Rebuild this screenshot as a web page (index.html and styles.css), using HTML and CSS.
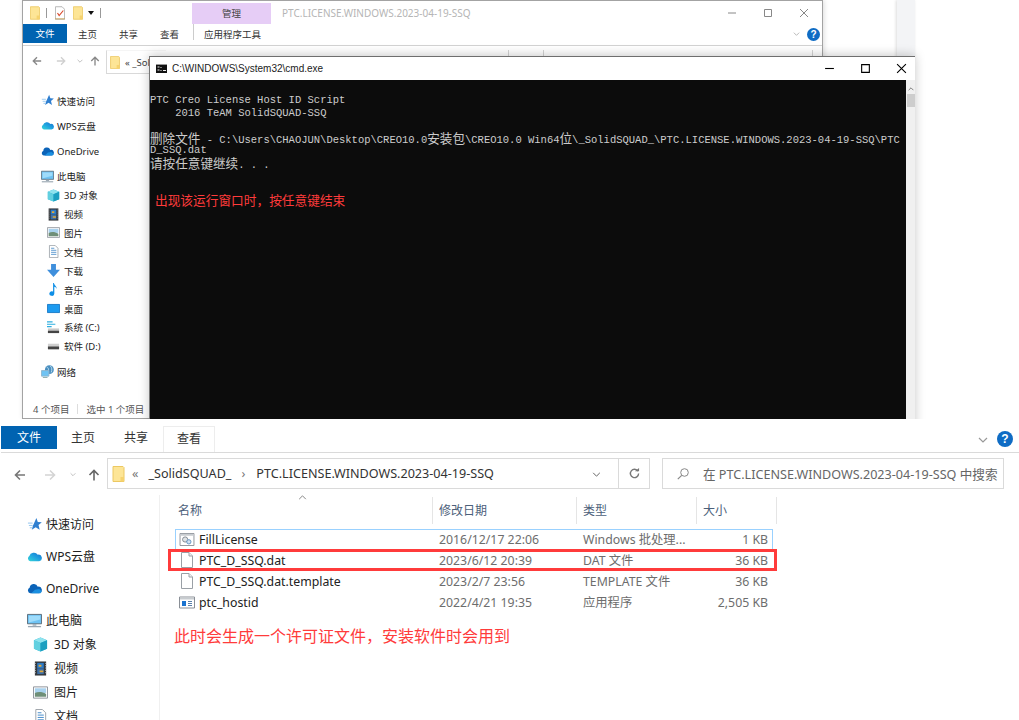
FILE: index.html
```html
<!DOCTYPE html>
<html lang="zh-CN">
<head>
<meta charset="utf-8">
<title>PTC.LICENSE.WINDOWS.2023-04-19-SSQ</title>
<link rel="stylesheet" href="styles.css">
</head>
<body>
<svg class="defs" width="0" height="0" aria-hidden="true">
  <defs>
    <linearGradient id="g-wps" x1="0" y1="1" x2="1" y2="0"><stop offset="0" stop-color="#35d6d8"/><stop offset=".55" stop-color="#1f9ee0"/><stop offset="1" stop-color="#1470cc"/></linearGradient>
    <symbol id="i-folder" viewBox="0 0 12 16"><path d="M.5.5h10l1 1v14H.5z" fill="#fde596" stroke="#ecc862"/><path d="M8 11h3.500v4.500H8z" fill="#f6d36f"/></symbol>
    <symbol id="i-check" viewBox="0 0 12 16"><path d="M.5.5h8l3 3v12H.5z" fill="#fff" stroke="#a8a8a8"/><path d="M3 8l2 3 5-6" fill="none" stroke="#d9482b" stroke-width="1.400"/><path d="M0 15h12" stroke="#c8a050"/></symbol>
    <symbol id="i-star" viewBox="0 0 16 16"><path d="M10 1l1.500 4.300L15.800 5.500 12.300 8.500l1.200 5-4.200-2.700-4.200 2.700 1.200-4.200z" fill="#2f7fd0"/><path d="M1 6.500h5M2 9h4M3 11.500h3" stroke="#8cc2ee" stroke-width="1"/></symbol>
    <symbol id="i-wps" viewBox="0 0 16 11"><path d="M3.500 10.500A3 3 0 0 1 2.500 5 5 4.500 0 0 1 11.500 3.500a3.500 3.500 0 0 1 1.500 7z" fill="url(#g-wps)"/></symbol>
    <symbol id="i-cloud" viewBox="0 0 16 11"><path d="M3.500 10.500A3 3 0 0 1 2.800 4.800 4.500 4.500 0 0 1 11.500 3.500a3.500 3.500 0 0 1 1.500 7z" fill="#0b63b8"/><path d="M4.500 10.500l4-3.800 4.500-.7 2.800 2.500-1.500 2z" fill="#1a8fe0"/></symbol>
    <symbol id="i-pc" viewBox="0 0 16 16"><path d="M.5 1.500h15v10H.5z" fill="#6ec3f4" stroke="#5a6a78"/><path d="M2 3h12v4L2 10z" fill="#9fdcfb"/><path d="M6 12h4v1.500H6z" fill="#9aa7b2"/><path d="M1 14.500h14" stroke="#9aa7b2" stroke-width="1.400"/></symbol>
    <symbol id="i-cube" viewBox="0 0 16 16"><path d="M8 .5l7 3v9l-7 3-7-3v-9z" fill="#2ab5d4"/><path d="M8 .5l7 3L8 6.500 1 3.500z" fill="#8fe3ee"/><path d="M1 3.500l7 3v9l-7-3z" fill="#62d0e0"/><path d="M8 6.500l7-3v9l-7 3z" fill="#1c9fc0"/></symbol>
    <symbol id="i-film" viewBox="0 0 16 16"><path d="M2 .5h12v15H2z" fill="#33373b"/><path d="M4.500 2h7v6h-7z" fill="#2a7ac8"/><path d="M4.500 8h7v6h-7z" fill="#3d70a8"/><path d="M6 4h3v2H6zM7 10h4v2H7z" fill="#e0a83a"/><path d="M2.500 2v12M13.500 2v12" stroke="#c8c8c8" stroke-dasharray="1 1.500"/></symbol>
    <symbol id="i-pic" viewBox="0 0 16 13"><path d="M.5.5h15v12H.5z" fill="#fff" stroke="#8a8f96"/><path d="M2 2h12v5H2z" fill="#a9d2ee"/><path d="M2 7c3-1.500 8-1.500 12 1v3H2z" fill="#6f8f78"/></symbol>
    <symbol id="i-doc" viewBox="0 0 12 16"><path d="M1 .5h7l3.500 3.500v11.500H1z" fill="#fff" stroke="#9aa0a6"/><path d="M3 4h4M3 6.500h6.500M3 9h6.500M3 11.500h6.500" stroke="#3f86c6"/></symbol>
    <symbol id="i-down" viewBox="0 0 16 16"><path d="M5 0h6v7h5l-8 9-8-9h5z" fill="#3f8fdc"/></symbol>
    <symbol id="i-note" viewBox="0 0 10 16"><path d="M4.500 0h1c.500 3 3.500 3.500 3.500 7.500-.800-2-2-2.500-3-2.800V13a3 2.800 0 1 1-1.500-2.400z" fill="#0f8fe6"/></symbol>
    <symbol id="i-desk" viewBox="0 0 16 11"><path d="M.5.500h15v10H.5z" fill="#1d9bf0" stroke="#0a6fc0"/></symbol>
    <symbol id="i-sys" viewBox="0 0 14 14"><path d="M0 1h6M0 3.500h9M0 6h5" stroke="#2eaee0" stroke-width="1.200"/><path d="M1 8h12v5H1z" fill="#c8c8c8"/><path d="M1 10.500h12V13H1z" fill="#444"/></symbol>
    <symbol id="i-drv" viewBox="0 0 14 8"><path d="M1 1h12v6H1z" fill="#cfcfcf"/><path d="M1 4h12v3H1z" fill="#444"/></symbol>
    <symbol id="i-net" viewBox="0 0 14 14"><circle cx="9" cy="5" r="4.800" fill="#4a8fc0"/><path d="M6 2c2 1 3 3 1 6M10 1c2 2 2 4 1 7" stroke="#bfe0f0" fill="none"/><path d="M.5 6h8v6H.5z" fill="#6ec3f4" stroke="#8fb4cc"/><path d="M2 13.500h5" stroke="#8aa"/></symbol>
    <symbol id="i-gear" viewBox="0 0 16 14"><path d="M.5.500h15v13H.5z" fill="#fff" stroke="#8a8f96"/><path d="M1 1h14v2H1z" fill="#c8ccd0"/><circle cx="6" cy="7" r="2.800" fill="#dfe3e6" stroke="#7d858c"/><circle cx="10" cy="9.500" r="2.300" fill="#cfe0f0" stroke="#5f90c0"/></symbol>
    <symbol id="i-page" viewBox="0 0 12 16"><path d="M.5.500h7.500l3.500 3.500v11.500H.5z" fill="#fff" stroke="#9aa0a6"/><path d="M8 .500V4h3.500" fill="#eef0f2" stroke="#9aa0a6"/></symbol>
    <symbol id="i-exe" viewBox="0 0 16 12"><path d="M.5.500h15v11H.5z" fill="#fff" stroke="#8a8f96"/><path d="M1 1h14v2H1z" fill="#c8ccd0"/><path d="M3 4.500h4v5H3z" fill="#1a73d0"/><path d="M9 5h4M9 7h4M9 9h4" stroke="#5a7fa8"/></symbol>
    <symbol id="i-console" viewBox="0 0 11 9"><path d="M0 0h11v9H0z" fill="#111"/><path d="M0 .5h11" stroke="#999"/><path d="M1.500 3h2M1.500 6h2M5 3v1M5 6v1M7 6.500h3" stroke="#eee"/></symbol>
    <symbol id="i-back" viewBox="0 0 12 12"><path d="M11 6H1.500M6 1.500L1.500 6 6 10.500" fill="none" stroke="currentColor" stroke-width="1.600"/></symbol>
    <symbol id="i-fwd" viewBox="0 0 12 12"><path d="M1 6h9.500M6 1.500L10.500 6 6 10.500" fill="none" stroke="currentColor" stroke-width="1.600"/></symbol>
    <symbol id="i-up" viewBox="0 0 12 12"><path d="M6 11.500V1.500M1.500 6L6 1.500 10.500 6" fill="none" stroke="currentColor" stroke-width="1.600"/></symbol>
    <symbol id="i-chev" viewBox="0 0 10 6"><path d="M1 1l4 4 4-4" fill="none" stroke="currentColor" stroke-width="1.200"/></symbol>
    <symbol id="i-refresh" viewBox="0 0 12 12"><path d="M9.800 3.500A4.500 4.500 0 1 0 10.500 6" fill="none" stroke="currentColor" stroke-width="1.500"/><path d="M6.500 3.500h4.500V0" fill="currentColor"/></symbol>
    <symbol id="i-search" viewBox="0 0 12 12"><circle cx="7.500" cy="4.500" r="3.800" fill="none" stroke="currentColor"/><path d="M4.700 7.300L.8 11.200" stroke="currentColor" stroke-width="1.200"/></symbol>
    <symbol id="i-min" viewBox="0 0 10 10"><path d="M1 5h8" stroke="currentColor"/></symbol>
    <symbol id="i-max" viewBox="0 0 10 10"><path d="M1.500 1.500h7v7h-7z" fill="none" stroke="currentColor"/></symbol>
    <symbol id="i-close" viewBox="0 0 10 10"><path d="M1 1l8 8M9 1l-8 8" stroke="currentColor"/></symbol>
  </defs>
</svg>

<div class="page">
  <section class="scene">
    <div class="backwin"></div>

    <div class="win">
      <header class="w-title">
        <svg class="q q-folder"><use href="#i-folder"/></svg>
        <span class="q-sep"></span>
        <svg class="q q-check"><use href="#i-check"/></svg>
        <svg class="q q-folder2"><use href="#i-folder"/></svg>
        <span class="q-drop"></span>
        <span class="q-sep q-sep2"></span>
        <span class="w-manage">管理</span>
        <span class="w-name">PTC.LICENSE.WINDOWS.2023-04-19-SSQ</span>
        <span class="w-ctrls">
          <svg><use href="#i-min"/></svg>
          <svg><use href="#i-max"/></svg>
          <svg><use href="#i-close"/></svg>
        </span>
      </header>
      <nav class="w-tabs">
        <span class="w-tab w-file">文件</span>
        <span class="w-tab w-home">主页</span>
        <span class="w-tab w-share">共享</span>
        <span class="w-tab w-view">查看</span>
        <span class="w-tab w-tools">应用程序工具</span>
        <svg class="w-chev"><use href="#i-chev"/></svg>
        <span class="help w-help">?</span>
      </nav>
      <div class="w-nav">
        <svg class="w-back"><use href="#i-back"/></svg>
        <svg class="w-fwd"><use href="#i-fwd"/></svg>
        <svg class="w-dn"><use href="#i-chev"/></svg>
        <svg class="w-up"><use href="#i-up"/></svg>
        <div class="w-addr">
          <svg><use href="#i-folder"/></svg>
          <span>« _SolidSQUAD_</span>
        </div>
        <div class="w-ticks"><i></i><i></i><i></i></div>
      </div>
      <aside class="w-side">
        <div class="wi top"><svg><use href="#i-star"/></svg>快速访问</div>
        <div class="wi top"><svg><use href="#i-wps"/></svg>WPS云盘</div>
        <div class="wi top"><svg><use href="#i-cloud"/></svg>OneDrive</div>
        <div class="wi top"><svg><use href="#i-pc"/></svg>此电脑</div>
        <div class="wi"><svg><use href="#i-cube"/></svg>3D 对象</div>
        <div class="wi"><svg><use href="#i-film"/></svg>视频</div>
        <div class="wi"><svg><use href="#i-pic"/></svg>图片</div>
        <div class="wi"><svg><use href="#i-doc"/></svg>文档</div>
        <div class="wi"><svg><use href="#i-down"/></svg>下载</div>
        <div class="wi"><svg><use href="#i-note"/></svg>音乐</div>
        <div class="wi"><svg><use href="#i-desk"/></svg>桌面</div>
        <div class="wi"><svg><use href="#i-sys"/></svg>系统 (C:)</div>
        <div class="wi"><svg><use href="#i-drv"/></svg>软件 (D:)</div>
        <div class="wi top"><svg><use href="#i-net"/></svg>网络</div>
      </aside>
      <footer class="w-status"><span>4 个项目</span><i></i><span>选中 1 个项目</span></footer>
    </div>

    <div class="cmd">
      <header class="cmd-title">
        <svg class="cmd-icon"><use href="#i-console"/></svg>
        <span class="cmd-name">C:\WINDOWS\System32\cmd.exe</span>
        <span class="cmd-ctrls">
          <svg><use href="#i-min"/></svg>
          <svg><use href="#i-max"/></svg>
          <svg><use href="#i-close"/></svg>
        </span>
      </header>
      <div class="cmd-main">
        <div class="console">
<div class="ln">PTC Creo License Host ID Script</div>
<div class="ln">    2016 TeAM SolidSQUAD-SSQ</div>
<div class="ln">&nbsp;</div>
<div class="ln"><b>删除文件</b> - C:\Users\CHAOJUN\Desktop\CREO10.0<b>安装包</b>\CREO10.0 Win64<b>位</b>\_SolidSQUAD_\PTC.LICENSE.WINDOWS.2023-04-19-SSQ\PTC</div>
<div class="ln">D_SSQ.dat</div>
<div class="ln"><b>请按任意键继续</b>. . .</div>
          <p class="cmd-note">出现该运行窗口时，按任意键结束</p>
        </div>
        <div class="cmd-scroll"><svg><use href="#i-chev"/></svg><span></span></div>
      </div>
    </div>
  </section>

  <section class="ex">
    <nav class="tabs">
      <span class="tab tab-file">文件</span>
      <span class="tab tab-home">主页</span>
      <span class="tab tab-share">共享</span>
      <span class="tab tab-view">查看</span>
      <svg class="tabs-chev"><use href="#i-chev"/></svg>
      <span class="help tabs-help">?</span>
    </nav>
    <div class="navbar">
      <svg class="n-back"><use href="#i-back"/></svg>
      <svg class="n-fwd"><use href="#i-fwd"/></svg>
      <svg class="n-dn"><use href="#i-chev"/></svg>
      <svg class="n-up"><use href="#i-up"/></svg>
      <div class="addr">
        <svg class="addr-folder"><use href="#i-folder"/></svg>
        <span class="addr-mark">«</span>
        <span class="addr-a">_SolidSQUAD_</span>
        <span class="addr-sep">›</span>
        <span class="addr-b">PTC.LICENSE.WINDOWS.2023-04-19-SSQ</span>
        <svg class="addr-chev"><use href="#i-chev"/></svg>
        <span class="addr-ref"><svg><use href="#i-refresh"/></svg></span>
      </div>
      <div class="search">
        <svg><use href="#i-search"/></svg>
        <span>在 PTC.LICENSE.WINDOWS.2023-04-19-SSQ 中搜索</span>
      </div>
    </div>
    <div class="body">
      <aside class="side">
        <div class="si top"><svg><use href="#i-star"/></svg>快速访问</div>
        <div class="si top"><svg><use href="#i-wps"/></svg>WPS云盘</div>
        <div class="si top"><svg><use href="#i-cloud"/></svg>OneDrive</div>
        <div class="si top"><svg><use href="#i-pc"/></svg>此电脑</div>
        <div class="si"><svg><use href="#i-cube"/></svg>3D 对象</div>
        <div class="si"><svg><use href="#i-film"/></svg>视频</div>
        <div class="si"><svg><use href="#i-pic"/></svg>图片</div>
        <div class="si"><svg><use href="#i-doc"/></svg>文档</div>
      </aside>
      <main class="list">
        <span class="sort"><svg><use href="#i-chev"/></svg></span>
        <div class="head">
          <span>名称</span><span>修改日期</span><span>类型</span><span>大小</span>
        </div>
        <div class="rows">
          <div class="row sel"><span class="nm"><svg><use href="#i-gear"/></svg>FillLicense</span><span>2016/12/17 22:06</span><span>Windows 批处理...</span><span class="sz">1 KB</span></div>
          <div class="row"><span class="nm"><svg class="pg"><use href="#i-page"/></svg>PTC_D_SSQ.dat</span><span>2023/6/12 20:39</span><span>DAT 文件</span><span class="sz">36 KB</span></div>
          <div class="row"><span class="nm"><svg class="pg"><use href="#i-page"/></svg>PTC_D_SSQ.dat.template</span><span>2023/2/7 23:56</span><span>TEMPLATE 文件</span><span class="sz">36 KB</span></div>
          <div class="row"><span class="nm"><svg><use href="#i-exe"/></svg>ptc_hostid</span><span>2022/4/21 19:35</span><span>应用程序</span><span class="sz">2,505 KB</span></div>
          <div class="mark"></div>
        </div>
        <p class="note">此时会生成一个许可证文件，安装软件时会用到</p>
      </main>
    </div>
  </section>
</div>
</body>
</html>
```
FILE: styles.css
```css
* { box-sizing: border-box; }
html, body { margin: 0; padding: 0; background: #fff; }
body { font-family: "Noto Sans", "Noto Sans CJK SC", sans-serif; color: #222; overflow: hidden; }
.defs { position: absolute; }
svg { display: block; flex: none; overflow: visible; }
.page { width: 1019px; height: 720px; overflow: hidden; }

/* ---------- top picture: two windows on a desktop ---------- */
.scene { position: relative; height: 419px; overflow: hidden; }
.backwin { position: absolute; left: 897px; top: 0; width: 18px; height: 60px; background: #f3f4f6; box-shadow: -1px 0 3px rgba(0,0,0,.14); }

.win { position: absolute; left: 22px; top: 0; width: 801px; height: 419px; background: #fff; border: 1px solid #a3a3a3; box-shadow: 1px 0 5px rgba(0,0,0,.14); display: flex; flex-direction: column; font-size: 9.5px; }
.w-title { height: 23px; display: flex; align-items: center; position: relative; }
.q { width: 10px; height: 14px; }
.q-folder { margin-left: 7px; }
.q-sep { width: 1px; height: 10px; background: #999; margin-left: 6px; }
.q-check { margin-left: 8px; }
.q-folder2 { margin-left: 8px; }
.q-drop { width: 0; height: 0; margin-left: 5px; border: 3px solid transparent; border-top: 4px solid #111; border-bottom: 0; }
.q-sep2 { margin-left: 6px; }
.w-manage { align-self: flex-end; margin-left: 91px; width: 79px; height: 21px; background: #e6cdf6; text-align: center; line-height: 21px; color: #444; }
.w-name { margin-left: 11px; color: #b5b5b5; font-size: 10px; }
.w-ctrls { position: absolute; left: 704px; top: 7px; display: flex; gap: 26px; color: #888; }
.w-ctrls svg { width: 10px; height: 10px; }

.w-tabs { height: 22px; display: flex; align-items: stretch; border-bottom: 1px solid #d2d2d2; position: relative; color: #333; }
.w-tab { line-height: 21px; }
.w-file { width: 44px; height: 19px; line-height: 19px; background: #0063b1; color: #fff; text-align: center; }
.w-home { margin-left: 11px; }
.w-share { margin-left: 22px; }
.w-view { margin-left: 22px; }
.w-tools { margin-left: 14px; padding-left: 10px; height: 16px; border-left: 1px solid #ccc; }
.w-chev { position: absolute; left: 770px; top: 8px; width: 7px; height: 4px; color: #aaa; }
.help { border-radius: 50%; background: #0f6cc4; color: #fff; text-align: center; font-family: "Liberation Sans", sans-serif; font-weight: 700; }
.w-help { position: absolute; left: 784px; top: 4px; width: 13px; height: 13px; line-height: 13px; font-size: 10px; }

.w-nav { height: 32px; position: relative; color: #999; }
.w-nav > svg { position: absolute; }
.w-back { left: 9px; top: 10px; width: 10px; height: 10px; color: #888; }
.w-fwd { left: 33px; top: 10px; width: 10px; height: 10px; color: #d0d0d0; }
.w-dn { left: 54px; top: 13px; width: 6px; height: 4px; color: #aaa; }
.w-up { left: 67px; top: 10px; width: 10px; height: 10px; color: #888; }
.w-addr { position: absolute; left: 83px; top: 4px; width: 60px; height: 24px; border: 1px solid #d9d9d9; border-top-color: #f5f5f5; border-right: 0; display: flex; align-items: center; gap: 5px; color: #444; font-size: 9.5px; white-space: nowrap; }
.w-addr svg { width: 10px; height: 13px; margin-left: 3px; }
.w-ticks i { position: absolute; top: 4px; width: 1px; height: 6px; background: #d4d4d4; }
.w-ticks i:nth-child(1) { left: 485px; }
.w-ticks i:nth-child(2) { left: 520px; }
.w-ticks i:nth-child(3) { left: 789px; }

.w-side { flex: 1; padding-top: 7px; }
.wi { height: 18.9px; display: flex; align-items: center; padding-left: 24px; white-space: nowrap; color: #222; }
.wi svg { width: 13px; height: 13px; margin-right: 4px; }
.wi.top { padding-left: 18px; margin-top: 6.3px; }
.wi.top svg { margin-right: 3px; }
.w-status { height: 18px; display: flex; align-items: center; padding-left: 10px; color: #555; }
.w-status i { width: 1px; height: 10px; background: #ddd; margin: 0 8px; }

.cmd { position: absolute; left: 149px; top: 56px; width: 766px; height: 380px; background: #fff; border-top: 1px solid #6e6e6e; border-left: 1px solid #777; box-shadow: 0 -1px 10px rgba(0,0,0,.22); display: flex; flex-direction: column; }
.cmd-title { height: 23px; display: flex; align-items: center; position: relative; }
.cmd-icon { width: 11px; height: 9px; margin-left: 6px; }
.cmd-name { margin-left: 5px; font: 10px "Liberation Sans", sans-serif; color: #222; }
.cmd-ctrls { position: absolute; left: 674px; top: 6px; display: flex; gap: 25px; color: #000; }
.cmd-ctrls svg { width: 11px; height: 11px; }
.cmd-main { flex: 1; display: flex; min-height: 0; }
.console { width: 756px; background: #0c0c0c; padding-top: 14px; color: #ccc; font: 10.5px/12.5px "Liberation Mono", "Noto Sans CJK SC", monospace; }
.ln { white-space: pre; height: 12.5px; }
.ln b { font: 400 12.6px/12.5px "Noto Sans CJK SC", sans-serif; }
.cmd-note { margin: 24px 0 0 5px; color: #ff3b3b; font: 12.7px/14px "Noto Sans CJK SC", sans-serif; }
.cmd-scroll { width: 9px; background: #f0f0f0; padding: 7px 0 0 1px; }
.cmd-scroll svg { width: 6px; height: 4px; margin-left: 1px; transform: scaleY(-1); color: #555; }
.cmd-scroll span { display: block; height: 13px; margin-top: 3px; background: #cdcdcd; }

/* ---------- bottom picture: explorer ---------- */
.ex { padding-top: 7px; }
.tabs { height: 27px; margin-left: 1px; display: flex; border-bottom: 1px solid #dadada; position: relative; font-size: 12px; color: #333; }
.tab { height: 23px; line-height: 23px; text-align: center; }
.tab-file { width: 56px; background: #0063b1; color: #fff; }
.tab-home { width: 24px; margin-left: 14px; }
.tab-share { width: 24px; margin-left: 29px; }
.tab-view { width: 52px; height: 26px; margin-left: 15px; background: #fff; border: 1px solid #ededed; border-bottom: 0; }
.tabs-chev { position: absolute; left: 977px; top: 11px; width: 10px; height: 6px; color: #999; }
.tabs-help { position: absolute; left: 996px; top: 5px; width: 16px; height: 16px; line-height: 16px; font-size: 12px; }

.navbar { height: 42px; position: relative; }
.navbar > svg { position: absolute; }
.n-back { left: 14px; top: 16px; width: 12px; height: 12px; color: #777; }
.n-fwd { left: 44px; top: 16px; width: 12px; height: 12px; color: #d4d4d4; }
.n-dn { left: 70px; top: 19px; width: 6px; height: 5px; color: #aaa; }
.n-up { left: 88px; top: 16px; width: 12px; height: 12px; color: #666; }
.addr { position: absolute; left: 107px; top: 5px; width: 543px; height: 31px; border: 1px solid #dadada; display: flex; align-items: center; font-size: 12.6px; color: #333; white-space: nowrap; }
.addr-folder { width: 13px; height: 16px; margin-left: 4px; }
.addr-mark { margin-left: 7px; color: #777; }
.addr-a { margin-left: 10px; }
.addr-sep { margin-left: 10px; color: #777; }
.addr-b { margin-left: 11px; }
.addr-chev { position: absolute; left: 484px; top: 13px; width: 9px; height: 5px; color: #666; }
.addr-ref { position: absolute; left: 510px; top: 0; width: 32px; height: 29px; border-left: 1px solid #dadada; display: flex; align-items: center; justify-content: center; color: #777; }
.addr-ref svg { width: 11px; height: 11px; }
.search { position: absolute; left: 662px; top: 5px; width: 342px; height: 31px; border: 1px solid #dadada; display: flex; align-items: center; font-size: 12.6px; color: #666; white-space: nowrap; }
.search svg { width: 12px; height: 12px; margin-left: 14px; color: #888; }
.search span { margin-left: 14px; }

.body { display: flex; height: 300px; }
.side { width: 160px; flex: none; border-right: 1px solid #f0f0f0; padding-top: 9px; font-size: 12px; }
.si { height: 24px; display: flex; align-items: center; padding-left: 33px; white-space: nowrap; color: #222; }
.si svg { width: 15px; height: 15px; margin-right: 6px; }
.si.top { padding-left: 27px; margin-top: 8px; }
.si.top svg { margin-right: 4px; }

.list { flex: 1; position: relative; font-size: 12.3px; }
.sort { position: absolute; left: 138px; top: 0; color: #888; }
.sort svg { width: 9px; height: 5px; transform: scaleY(-1); }
.head { display: grid; grid-template-columns: 273px 144px 120px 80px; height: 27px; margin-top: 2px; color: #4c607a; font-size: 12px; }
.head span { padding-left: 6px; line-height: 27px; border-right: 1px solid #e5e5e5; }
.head span:first-child { padding-left: 18px; }
.rows { position: relative; margin: 5px 0 0 15px; width: 598px; }
.row { display: grid; grid-template-columns: 264px 144px 120px 65px; height: 21px; padding-bottom: 1px; align-items: center; color: #6d6d6d; white-space: nowrap; }
.row.sel { outline: 1px solid #99d1ff; outline-offset: -1px; }
.nm { display: flex; align-items: center; color: #222; padding-left: 4px; }
.nm svg { width: 16px; height: 13px; margin-right: 4px; }
.nm svg.pg { height: 16px; }
.sz { text-align: right; }
.mark { position: absolute; left: -7px; top: 20px; width: 609px; height: 22px; border: 3px solid #ff3b3b; }
.note { margin: 12px 0 0 14px; color: #ff3b3b; font: 16px/20px "Noto Sans CJK SC", sans-serif; }
```
